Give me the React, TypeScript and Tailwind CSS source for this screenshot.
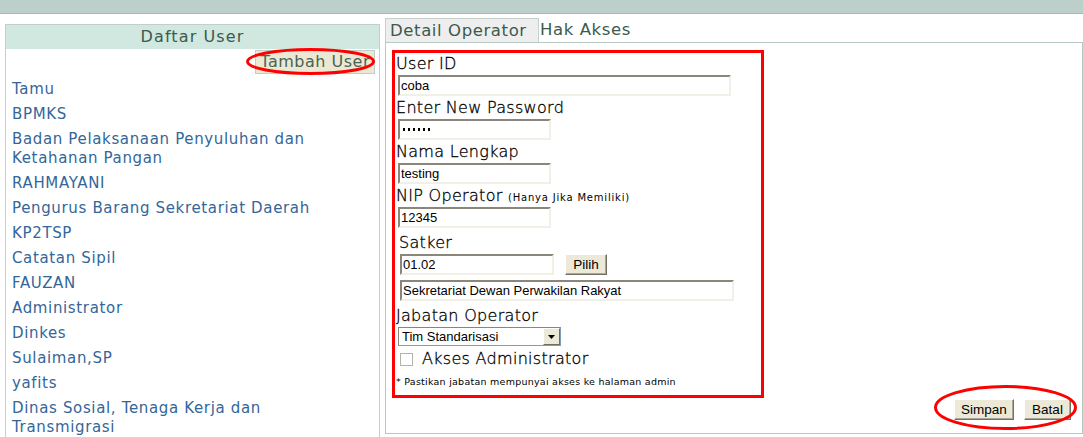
import React from 'react'

const USERS = [
  'Tamu',
  'BPMKS',
  'Badan Pelaksanaan Penyuluhan dan Ketahanan Pangan',
  'RAHMAYANI',
  'Pengurus Barang Sekretariat Daerah',
  'KP2TSP',
  'Catatan Sipil',
  'FAUZAN',
  'Administrator',
  'Dinkes',
  'Sulaiman,SP',
  'yafits',
  'Dinas Sosial, Tenaga Kerja dan Transmigrasi',
]

const INPUT =
  "h-[21px] border-2 border-t-[#8a877a] border-l-[#8a877a] border-b-[#f1efe6] border-r-[#f1efe6] bg-white px-[1px] text-[13px] leading-[17px] text-black font-['Liberation_Sans',sans-serif] outline-none"

const BTN =
  "h-[21px] bg-[#ece9d8] border border-t-white border-l-white border-b-[#716f64] border-r-[#716f64] shadow-[inset_-1px_-1px_0_#aca899] text-[13.5px] leading-[17px] text-black font-['Liberation_Sans',sans-serif]"

// thin black label text, like the old bitmap rendering
const THIN = 'font-light tracking-[0.3px] [-webkit-text-stroke:0.3px_#000]'

function Label({ children, className = '' }: { children: React.ReactNode; className?: string }) {
  return <div className={`h-[22px] leading-[22px] text-[16px] text-black ${THIN} ${className}`}>{children}</div>
}

export default function App() {
  return (
    <div className="relative w-[1083px] h-[437px] overflow-hidden bg-white font-['DejaVu_Sans',sans-serif]">
      <div className="h-[14px] bg-[#bccfca] border-b border-[#a9b9b5]" />

      <div className="flex pl-[5px] gap-[5px]">
        {/* left: daftar user */}
        <div className="w-[375px] shrink-0 mt-[10px] h-[500px] border border-[#c3cfcb]">
          <div className="h-[24px] leading-[24px] bg-[#d0e8df] text-center text-[16px] tracking-[1.1px] text-[#3b5a4e]">
            Daftar User
          </div>
          <div className="flex justify-end pr-[4px] mt-[1px]">
            <button className="h-[24px] px-[4px] bg-[#ebe9d3] border border-[#c3cbc7] text-[16px] tracking-[0.5px] leading-[20px] text-[#4a6358]">
              Tambah User
            </button>
          </div>
          <ul className="mt-[6px] pl-[6px] pr-[14px]">
            {USERS.map((u) => (
              <li key={u} className="mb-[6px] text-[15px] leading-[19px] tracking-[0.65px] text-[#336699]">
                {u}
              </li>
            ))}
          </ul>
        </div>

        {/* right: detail */}
        <div className="flex-1 mt-[4px]">
          <div className="flex items-end h-[24px]">
            <div className="w-[154px] h-[24px] bg-[#eeeeee] border border-b-0 border-[#c5d0cc] pl-[4px] text-[16.5px] tracking-[0.6px] leading-[23px] text-[#3b5a4e]">
              Detail Operator
            </div>
            <div className="h-[24px] pl-[1px] text-[16.5px] tracking-[0.6px] leading-[23px] text-[#3b5a4e]">
              Hak Akses
            </div>
          </div>

          <div className="h-[392px] border border-[#b8c8c4] pt-[7px] pl-[6px]">
            <div className="w-[372px] h-[348px] border-[3px] border-[#ff0000]">
              <Label className="h-[20px] leading-[20px] pl-[1px]">User ID</Label>
              <input readOnly value="coba" className={`${INPUT} ml-[3px] w-[333px] block`} />

              <Label className="mt-[1px] pl-[1px]">Enter New Password</Label>
              <div className={`${INPUT} ml-[3px] w-[153px] flex items-center gap-[3px] pl-[3px]`}>
                {Array.from({ length: 6 }).map((_, i) => (
                  <span key={i} className="w-[2px] h-[3px] bg-black" />
                ))}
              </div>

              <Label className="mt-[1px] pl-[1px]">Nama Lengkap</Label>
              <input readOnly value="testing" className={`${INPUT} ml-[3px] w-[153px] block`} />

              <Label className="mt-[1px] pl-[1px]">
                NIP Operator{' '}
                <span className="text-[10px] tracking-[0.8px] font-normal [-webkit-text-stroke:0px]">
                  (Hanya Jika Memiliki)
                </span>
              </Label>
              <input readOnly value="12345" className={`${INPUT} ml-[3px] w-[153px] block`} />

              <Label className="mt-[4px] pl-[4px]">Satker</Label>
              <div className="flex ml-[5px] gap-[11px]">
                <input readOnly value="01.02" className={`${INPUT} w-[154px]`} />
                <button className={`${BTN} w-[42px]`}>Pilih</button>
              </div>
              <input
                readOnly
                value="Sekretariat Dewan Perwakilan Rakyat"
                className={`${INPUT} ml-[5px] mt-[5px] w-[334px] block`}
              />

              <Label className="mt-[4px] pl-[1px]">Jabatan Operator</Label>
              <div className="ml-[3px] w-[163px] h-[19px] flex border border-[#7f9db9] border-t-[#8a877a] border-l-[#8a877a] bg-white">
                <span className="flex-1 pl-[3px] text-[13px] leading-[17px] text-black font-['Liberation_Sans',sans-serif]">
                  Tim Standarisasi
                </span>
                <span className="w-[17px] h-[17px] bg-[#ece9d8] border border-t-white border-l-white border-b-[#716f64] border-r-[#716f64] flex items-center justify-center">
                  <svg width="7" height="4" viewBox="0 0 7 4">
                    <path d="M0 0h7L3.5 4z" fill="#000" />
                  </svg>
                </span>
              </div>

              <div className="flex items-center h-[22px] mt-[2px]">
                <span className="ml-[5px] w-[13px] h-[13px] border border-[#b5b3a8] bg-white" />
                <span className={`ml-[9px] text-[16px] leading-[22px] text-black ${THIN}`}>Akses Administrator</span>
              </div>

              <div className="mt-[5px] pl-[1px] text-[9.5px] tracking-[0.25px] leading-[14px] text-black">
                * Pastikan jabatan mempunyai akses ke halaman admin
              </div>
            </div>

            <div className="flex justify-end gap-[10px] pr-[11px] mt-[1px]">
              <button className={`${BTN} w-[60px]`}>Simpan</button>
              <button className={`${BTN} w-[47px]`}>Batal</button>
            </div>
          </div>
        </div>
      </div>

      {/* annotations */}
      <svg className="absolute inset-0 pointer-events-none" width="1083" height="437">
        <ellipse cx="310.5" cy="61.5" rx="63" ry="12" fill="none" stroke="#ff0000" strokeWidth="3" />
        <ellipse cx="1005.5" cy="407.5" rx="70" ry="21" fill="none" stroke="#ff0000" strokeWidth="3" />
      </svg>
    </div>
  )
}
